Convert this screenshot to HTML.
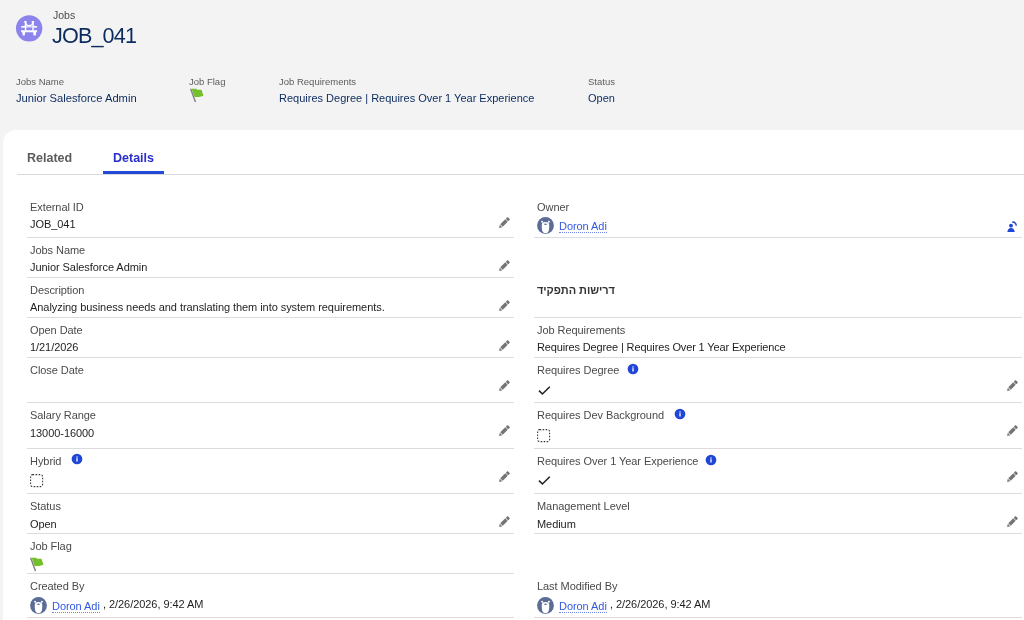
<!DOCTYPE html>
<html><head><meta charset="utf-8"><style>
html,body{margin:0;padding:0;}
body{width:1024px;height:620px;overflow:hidden;position:relative;background:#f3f3f3;font-family:"Liberation Sans", sans-serif;}
.t{position:absolute;line-height:1;white-space:nowrap;will-change:transform}
svg{display:block;overflow:visible}
</style></head><body>
<svg style="position:absolute;left:14px;top:13px" width="30" height="30" viewBox="0 0 30 30"><circle cx="15.15" cy="15.35" r="13.2" fill="#8c84ec"/>
<g fill="#fff">
<rect x="10.1" y="8.0" width="2.6" height="1.6" rx="0.7"/>
<rect x="17.6" y="8.0" width="2.6" height="1.6" rx="0.7"/>
<rect x="10.8" y="9" width="1.5" height="8.4"/>
<rect x="18.3" y="9" width="1.45" height="8.4"/>
<path d="M7.0 17.2H23.1V18.6L22.3 19.3H7.9L7.0 18.6Z"/>
<path d="M8.2 19.1H11.2L10.7 22.4H8.7Z"/>
<path d="M19.1 19.1H22.2L21.7 22.4H19.6Z"/>
<path d="M7.2 13.3L11 12.7V14.4L7.2 14.8Z"/>
<path d="M23.1 13.3L19.3 12.7V14.4L23.1 14.8Z"/>
<rect x="12" y="13.3" width="6.3" height="1.1"/>
</g>
<path d="M11.5 9.5C12.0 13.6 18.2 13.6 18.9 9.5" fill="none" stroke="#fff" stroke-width="1.3"/></svg>
<div class="t" style="left:53.00px;top:9.61px;font-size:10.5px;color:#4a4a4a;">Jobs</div>
<div class="t" style="left:52.00px;top:25.32px;font-size:21.6px;color:#0b2a5e;letter-spacing:-0.85px;">JOB_041</div>
<div class="t" style="left:15.70px;top:77.16px;font-size:9.5px;color:#5c5c5c;">Jobs Name</div>
<div class="t" style="left:15.70px;top:92.72px;font-size:11.2px;color:#0b2a5e;">Junior Salesforce Admin</div>
<div class="t" style="left:189.40px;top:77.16px;font-size:9.5px;color:#5c5c5c;">Job Flag</div>
<svg style="position:absolute;left:189.8px;top:89.2px" width="14" height="14" viewBox="0 0 14 14"><path d="M0.6 -0.2L5.5 13.1" stroke="#808080" stroke-width="1.4" fill="none"/>
<path d="M1.6 -0.3H6.4L7.0 0.7H11.5L13.4 6.5L13 6.9L8.8 7.9H4.6Z" fill="#74c02a"/></svg>
<div class="t" style="left:278.60px;top:77.16px;font-size:9.5px;color:#5c5c5c;">Job Requirements</div>
<div class="t" style="left:278.60px;top:92.79px;font-size:11px;color:#0b2a5e;">Requires Degree | Requires Over 1 Year Experience</div>
<div class="t" style="left:588.00px;top:77.16px;font-size:9.5px;color:#5c5c5c;">Status</div>
<div class="t" style="left:588.00px;top:92.79px;font-size:11px;color:#0b2a5e;">Open</div>
<div style="position:absolute;left:2.5px;top:129.7px;width:1100px;height:600px;background:#fff;border-top-left-radius:13px"></div>
<div class="t" style="left:27.00px;top:151.92px;font-size:12.5px;color:#5c5c5c;font-weight:700;">Related</div>
<div class="t" style="left:113.40px;top:151.92px;font-size:12.5px;color:#2a2fc9;font-weight:700;">Details</div>
<div style="position:absolute;left:16.7px;top:174px;width:1010px;height:1px;background:#d9d9d9;"></div>
<div style="position:absolute;left:103.2px;top:171px;width:60.6px;height:3px;background:#2448d8;"></div>
<div class="t" style="left:30.30px;top:201.99px;font-size:11px;color:#4a4a4a;letter-spacing:-0.06px;">External ID</div>
<div class="t" style="left:30.30px;top:218.69px;font-size:11px;color:#1e1e1e;letter-spacing:-0.06px;">JOB_041</div>
<svg style="position:absolute;left:498.15px;top:216.6px" width="12" height="12" viewBox="0 0 12 12"><g transform="translate(6 6) rotate(-45)" fill="#747474">
<path d="M-6.9 0L-4.2 -1.75V1.75Z"/>
<rect x="-3.5" y="-1.75" width="7" height="3.5"/>
<rect x="4.2" y="-1.75" width="2.6" height="3.5" rx="0.5"/></g></svg>
<div style="position:absolute;left:26.6px;top:237px;width:487.4px;height:1px;background:#dcdcdc;"></div>
<div class="t" style="left:30.30px;top:244.99px;font-size:11px;color:#4a4a4a;letter-spacing:-0.06px;">Jobs Name</div>
<div class="t" style="left:30.30px;top:261.69px;font-size:11px;color:#1e1e1e;letter-spacing:-0.06px;">Junior Salesforce Admin</div>
<svg style="position:absolute;left:498.15px;top:259.6px" width="12" height="12" viewBox="0 0 12 12"><g transform="translate(6 6) rotate(-45)" fill="#747474">
<path d="M-6.9 0L-4.2 -1.75V1.75Z"/>
<rect x="-3.5" y="-1.75" width="7" height="3.5"/>
<rect x="4.2" y="-1.75" width="2.6" height="3.5" rx="0.5"/></g></svg>
<div style="position:absolute;left:26.6px;top:277px;width:487.4px;height:1px;background:#dcdcdc;"></div>
<div class="t" style="left:30.30px;top:284.99px;font-size:11px;color:#4a4a4a;letter-spacing:-0.06px;">Description</div>
<div class="t" style="left:30.30px;top:301.69px;font-size:11px;color:#1e1e1e;letter-spacing:-0.06px;">Analyzing business needs and translating them into system requirements.</div>
<svg style="position:absolute;left:498.15px;top:299.6px" width="12" height="12" viewBox="0 0 12 12"><g transform="translate(6 6) rotate(-45)" fill="#747474">
<path d="M-6.9 0L-4.2 -1.75V1.75Z"/>
<rect x="-3.5" y="-1.75" width="7" height="3.5"/>
<rect x="4.2" y="-1.75" width="2.6" height="3.5" rx="0.5"/></g></svg>
<div style="position:absolute;left:26.6px;top:317px;width:487.4px;height:1px;background:#dcdcdc;"></div>
<div class="t" style="left:30.30px;top:324.99px;font-size:11px;color:#4a4a4a;letter-spacing:-0.06px;">Open Date</div>
<div class="t" style="left:30.30px;top:341.69px;font-size:11px;color:#1e1e1e;letter-spacing:-0.06px;">1/21/2026</div>
<svg style="position:absolute;left:498.15px;top:339.6px" width="12" height="12" viewBox="0 0 12 12"><g transform="translate(6 6) rotate(-45)" fill="#747474">
<path d="M-6.9 0L-4.2 -1.75V1.75Z"/>
<rect x="-3.5" y="-1.75" width="7" height="3.5"/>
<rect x="4.2" y="-1.75" width="2.6" height="3.5" rx="0.5"/></g></svg>
<div style="position:absolute;left:26.6px;top:357px;width:487.4px;height:1px;background:#dcdcdc;"></div>
<div class="t" style="left:30.30px;top:364.99px;font-size:11px;color:#4a4a4a;letter-spacing:-0.06px;">Close Date</div>
<svg style="position:absolute;left:498.15px;top:379.6px" width="12" height="12" viewBox="0 0 12 12"><g transform="translate(6 6) rotate(-45)" fill="#747474">
<path d="M-6.9 0L-4.2 -1.75V1.75Z"/>
<rect x="-3.5" y="-1.75" width="7" height="3.5"/>
<rect x="4.2" y="-1.75" width="2.6" height="3.5" rx="0.5"/></g></svg>
<div style="position:absolute;left:26.6px;top:402px;width:487.4px;height:1px;background:#dcdcdc;"></div>
<div class="t" style="left:30.30px;top:409.99px;font-size:11px;color:#4a4a4a;letter-spacing:-0.06px;">Salary Range</div>
<div class="t" style="left:30.30px;top:427.79px;font-size:11px;color:#1e1e1e;letter-spacing:-0.06px;">13000-16000</div>
<svg style="position:absolute;left:498.15px;top:424.6px" width="12" height="12" viewBox="0 0 12 12"><g transform="translate(6 6) rotate(-45)" fill="#747474">
<path d="M-6.9 0L-4.2 -1.75V1.75Z"/>
<rect x="-3.5" y="-1.75" width="7" height="3.5"/>
<rect x="4.2" y="-1.75" width="2.6" height="3.5" rx="0.5"/></g></svg>
<div style="position:absolute;left:26.6px;top:448px;width:487.4px;height:1px;background:#dcdcdc;"></div>
<div class="t" style="left:30.30px;top:455.99px;font-size:11px;color:#4a4a4a;letter-spacing:-0.06px;">Hybrid</div>
<svg style="position:absolute;left:30.0px;top:474.3px" width="14" height="14" viewBox="0 0 14 14"><rect x="0.6" y="0.6" width="12" height="12" rx="2" fill="none" stroke="#3a3a3a" stroke-width="1.1" stroke-dasharray="1.6 1.4"/></svg>
<svg style="position:absolute;left:71.3px;top:453.3px" width="12" height="12" viewBox="0 0 12 12"><circle cx="6" cy="6" r="5.35" fill="#1f46d6"/><rect x="5.35" y="3.4" width="1.3" height="1.2" fill="#fff"/><rect x="5.35" y="5.2" width="1.3" height="3.3" fill="#fff"/></svg>
<svg style="position:absolute;left:498.15px;top:470.6px" width="12" height="12" viewBox="0 0 12 12"><g transform="translate(6 6) rotate(-45)" fill="#747474">
<path d="M-6.9 0L-4.2 -1.75V1.75Z"/>
<rect x="-3.5" y="-1.75" width="7" height="3.5"/>
<rect x="4.2" y="-1.75" width="2.6" height="3.5" rx="0.5"/></g></svg>
<div style="position:absolute;left:26.6px;top:493px;width:487.4px;height:1px;background:#dcdcdc;"></div>
<div class="t" style="left:30.30px;top:500.99px;font-size:11px;color:#4a4a4a;letter-spacing:-0.06px;">Status</div>
<div class="t" style="left:30.30px;top:518.79px;font-size:11px;color:#1e1e1e;letter-spacing:-0.06px;">Open</div>
<svg style="position:absolute;left:498.15px;top:515.6px" width="12" height="12" viewBox="0 0 12 12"><g transform="translate(6 6) rotate(-45)" fill="#747474">
<path d="M-6.9 0L-4.2 -1.75V1.75Z"/>
<rect x="-3.5" y="-1.75" width="7" height="3.5"/>
<rect x="4.2" y="-1.75" width="2.6" height="3.5" rx="0.5"/></g></svg>
<div style="position:absolute;left:26.6px;top:533px;width:487.4px;height:1px;background:#dcdcdc;"></div>
<div class="t" style="left:30.30px;top:540.99px;font-size:11px;color:#4a4a4a;letter-spacing:-0.06px;">Job Flag</div>
<svg style="position:absolute;left:29.8px;top:558.3px" width="14" height="14" viewBox="0 0 14 14"><path d="M0.6 -0.2L5.5 13.1" stroke="#808080" stroke-width="1.4" fill="none"/>
<path d="M1.6 -0.3H6.4L7.0 0.7H11.5L13.4 6.5L13 6.9L8.8 7.9H4.6Z" fill="#74c02a"/></svg>
<div style="position:absolute;left:26.6px;top:573px;width:487.4px;height:1px;background:#dcdcdc;"></div>
<div class="t" style="left:30.30px;top:580.99px;font-size:11px;color:#4a4a4a;letter-spacing:-0.06px;">Created By</div>
<svg style="position:absolute;left:29.700000000000003px;top:597.1px" width="17" height="17" viewBox="0 0 17 17"><circle cx="8.5" cy="8.5" r="8.4" fill="#5b6c97"/>
<path d="M8.5 5.0C11.2 5.0 12.2 6.2 12.2 8.2V11C12.2 14.3 10.6 16.3 8.5 16.3S4.8 14.3 4.8 11V8.2C4.8 6.2 5.8 5.0 8.5 5.0Z" fill="#fff"/>
<circle cx="5.1" cy="4.7" r="1.0" fill="#fff"/><circle cx="11.9" cy="4.7" r="1.0" fill="#fff"/>
<ellipse cx="8.5" cy="7.3" rx="1.4" ry="0.75" fill="#5b6c97"/></svg>
<div class="t" style="left:51.70px;top:600.69px;font-size:11px;color:#3458e2;letter-spacing:-0.06px;border-bottom:1px dotted #6f88e8;padding-bottom:0px;">Doron Adi</div>
<div class="t" style="left:102.60px;top:599.29px;font-size:11px;color:#1e1e1e;letter-spacing:-0.06px;">, 2/26/2026, 9:42 AM</div>
<div style="position:absolute;left:26.6px;top:617px;width:487.4px;height:1px;background:#dcdcdc;"></div>
<div class="t" style="left:537.20px;top:201.99px;font-size:11px;color:#4a4a4a;letter-spacing:-0.06px;">Owner</div>
<svg style="position:absolute;left:537.0px;top:216.8px" width="17" height="17" viewBox="0 0 17 17"><circle cx="8.5" cy="8.5" r="8.4" fill="#5b6c97"/>
<path d="M8.5 5.0C11.2 5.0 12.2 6.2 12.2 8.2V11C12.2 14.3 10.6 16.3 8.5 16.3S4.8 14.3 4.8 11V8.2C4.8 6.2 5.8 5.0 8.5 5.0Z" fill="#fff"/>
<circle cx="5.1" cy="4.7" r="1.0" fill="#fff"/><circle cx="11.9" cy="4.7" r="1.0" fill="#fff"/>
<ellipse cx="8.5" cy="7.3" rx="1.4" ry="0.75" fill="#5b6c97"/></svg>
<div class="t" style="left:559.40px;top:220.69px;font-size:11px;color:#3458e2;letter-spacing:-0.06px;border-bottom:1px dotted #6f88e8;padding-bottom:0px;">Doron Adi</div>
<svg style="position:absolute;left:1005px;top:219px" width="14" height="14" viewBox="0 0 14 14"><g fill="#1f46d6"><circle cx="6.0" cy="6.7" r="1.9"/><path d="M2.4 12.9C2.5 10.4 4 9.0 6 9.0S9.5 10.4 9.7 12.9Z"/></g>
<path d="M7.2 3.4C9 2.6 10.8 3.6 11.4 6.6" fill="none" stroke="#1f46d6" stroke-width="1.5"/></svg>
<div style="position:absolute;left:534px;top:237px;width:488px;height:1px;background:#dcdcdc;"></div>
<div class="t" style="left:537.30px;top:284.69px;font-size:11px;color:#333333;font-weight:700;letter-spacing:-0.06px;">דרישות התפקיד</div>
<div style="position:absolute;left:534px;top:317px;width:488px;height:1px;background:#dcdcdc;"></div>
<div class="t" style="left:537.20px;top:324.99px;font-size:11px;color:#4a4a4a;letter-spacing:-0.06px;">Job Requirements</div>
<div class="t" style="left:537.20px;top:341.69px;font-size:11px;color:#1e1e1e;letter-spacing:-0.14px;">Requires Degree | Requires Over 1 Year Experience</div>
<div style="position:absolute;left:534px;top:357px;width:488px;height:1px;background:#dcdcdc;"></div>
<div class="t" style="left:537.20px;top:364.99px;font-size:11px;color:#4a4a4a;letter-spacing:-0.06px;">Requires Degree</div>
<svg style="position:absolute;left:627px;top:362.7px" width="12" height="12" viewBox="0 0 12 12"><circle cx="6" cy="6" r="5.35" fill="#1f46d6"/><rect x="5.35" y="3.4" width="1.3" height="1.2" fill="#fff"/><rect x="5.35" y="5.2" width="1.3" height="3.3" fill="#fff"/></svg>
<svg style="position:absolute;left:537.5px;top:386.0px" width="13" height="10" viewBox="0 0 13 10"><path d="M1 4.6L4.4 8L11.8 0.8" fill="none" stroke="#222" stroke-width="1.6"/></svg>
<svg style="position:absolute;left:1005.65px;top:379.6px" width="12" height="12" viewBox="0 0 12 12"><g transform="translate(6 6) rotate(-45)" fill="#747474">
<path d="M-6.9 0L-4.2 -1.75V1.75Z"/>
<rect x="-3.5" y="-1.75" width="7" height="3.5"/>
<rect x="4.2" y="-1.75" width="2.6" height="3.5" rx="0.5"/></g></svg>
<div style="position:absolute;left:534px;top:402px;width:488px;height:1px;background:#dcdcdc;"></div>
<div class="t" style="left:537.20px;top:409.99px;font-size:11px;color:#4a4a4a;letter-spacing:-0.06px;">Requires Dev Background</div>
<svg style="position:absolute;left:674.3px;top:407.59999999999997px" width="12" height="12" viewBox="0 0 12 12"><circle cx="6" cy="6" r="5.35" fill="#1f46d6"/><rect x="5.35" y="3.4" width="1.3" height="1.2" fill="#fff"/><rect x="5.35" y="5.2" width="1.3" height="3.3" fill="#fff"/></svg>
<svg style="position:absolute;left:537.3px;top:429.3px" width="14" height="14" viewBox="0 0 14 14"><rect x="0.6" y="0.6" width="12" height="12" rx="2" fill="none" stroke="#3a3a3a" stroke-width="1.1" stroke-dasharray="1.6 1.4"/></svg>
<svg style="position:absolute;left:1005.65px;top:424.6px" width="12" height="12" viewBox="0 0 12 12"><g transform="translate(6 6) rotate(-45)" fill="#747474">
<path d="M-6.9 0L-4.2 -1.75V1.75Z"/>
<rect x="-3.5" y="-1.75" width="7" height="3.5"/>
<rect x="4.2" y="-1.75" width="2.6" height="3.5" rx="0.5"/></g></svg>
<div style="position:absolute;left:534px;top:448px;width:488px;height:1px;background:#dcdcdc;"></div>
<div class="t" style="left:537.20px;top:455.99px;font-size:11px;color:#4a4a4a;letter-spacing:-0.06px;">Requires Over 1 Year Experience</div>
<svg style="position:absolute;left:705.2px;top:453.8px" width="12" height="12" viewBox="0 0 12 12"><circle cx="6" cy="6" r="5.35" fill="#1f46d6"/><rect x="5.35" y="3.4" width="1.3" height="1.2" fill="#fff"/><rect x="5.35" y="5.2" width="1.3" height="3.3" fill="#fff"/></svg>
<svg style="position:absolute;left:537.5px;top:476.4px" width="13" height="10" viewBox="0 0 13 10"><path d="M1 4.6L4.4 8L11.8 0.8" fill="none" stroke="#222" stroke-width="1.6"/></svg>
<svg style="position:absolute;left:1005.65px;top:470.6px" width="12" height="12" viewBox="0 0 12 12"><g transform="translate(6 6) rotate(-45)" fill="#747474">
<path d="M-6.9 0L-4.2 -1.75V1.75Z"/>
<rect x="-3.5" y="-1.75" width="7" height="3.5"/>
<rect x="4.2" y="-1.75" width="2.6" height="3.5" rx="0.5"/></g></svg>
<div style="position:absolute;left:534px;top:493px;width:488px;height:1px;background:#dcdcdc;"></div>
<div class="t" style="left:537.20px;top:500.99px;font-size:11px;color:#4a4a4a;letter-spacing:-0.06px;">Management Level</div>
<div class="t" style="left:537.20px;top:518.99px;font-size:11px;color:#1e1e1e;letter-spacing:-0.06px;">Medium</div>
<svg style="position:absolute;left:1005.65px;top:515.6px" width="12" height="12" viewBox="0 0 12 12"><g transform="translate(6 6) rotate(-45)" fill="#747474">
<path d="M-6.9 0L-4.2 -1.75V1.75Z"/>
<rect x="-3.5" y="-1.75" width="7" height="3.5"/>
<rect x="4.2" y="-1.75" width="2.6" height="3.5" rx="0.5"/></g></svg>
<div style="position:absolute;left:534px;top:533px;width:488px;height:1px;background:#dcdcdc;"></div>
<div class="t" style="left:537.20px;top:580.99px;font-size:11px;color:#4a4a4a;letter-spacing:-0.06px;">Last Modified By</div>
<svg style="position:absolute;left:537.2px;top:596.8px" width="17" height="17" viewBox="0 0 17 17"><circle cx="8.5" cy="8.5" r="8.4" fill="#5b6c97"/>
<path d="M8.5 5.0C11.2 5.0 12.2 6.2 12.2 8.2V11C12.2 14.3 10.6 16.3 8.5 16.3S4.8 14.3 4.8 11V8.2C4.8 6.2 5.8 5.0 8.5 5.0Z" fill="#fff"/>
<circle cx="5.1" cy="4.7" r="1.0" fill="#fff"/><circle cx="11.9" cy="4.7" r="1.0" fill="#fff"/>
<ellipse cx="8.5" cy="7.3" rx="1.4" ry="0.75" fill="#5b6c97"/></svg>
<div class="t" style="left:559.40px;top:600.69px;font-size:11px;color:#3458e2;letter-spacing:-0.06px;border-bottom:1px dotted #6f88e8;padding-bottom:0px;">Doron Adi</div>
<div class="t" style="left:610.20px;top:599.29px;font-size:11px;color:#1e1e1e;letter-spacing:-0.06px;">, 2/26/2026, 9:42 AM</div>
<div style="position:absolute;left:534px;top:617px;width:488px;height:1px;background:#dcdcdc;"></div>
</body></html>
